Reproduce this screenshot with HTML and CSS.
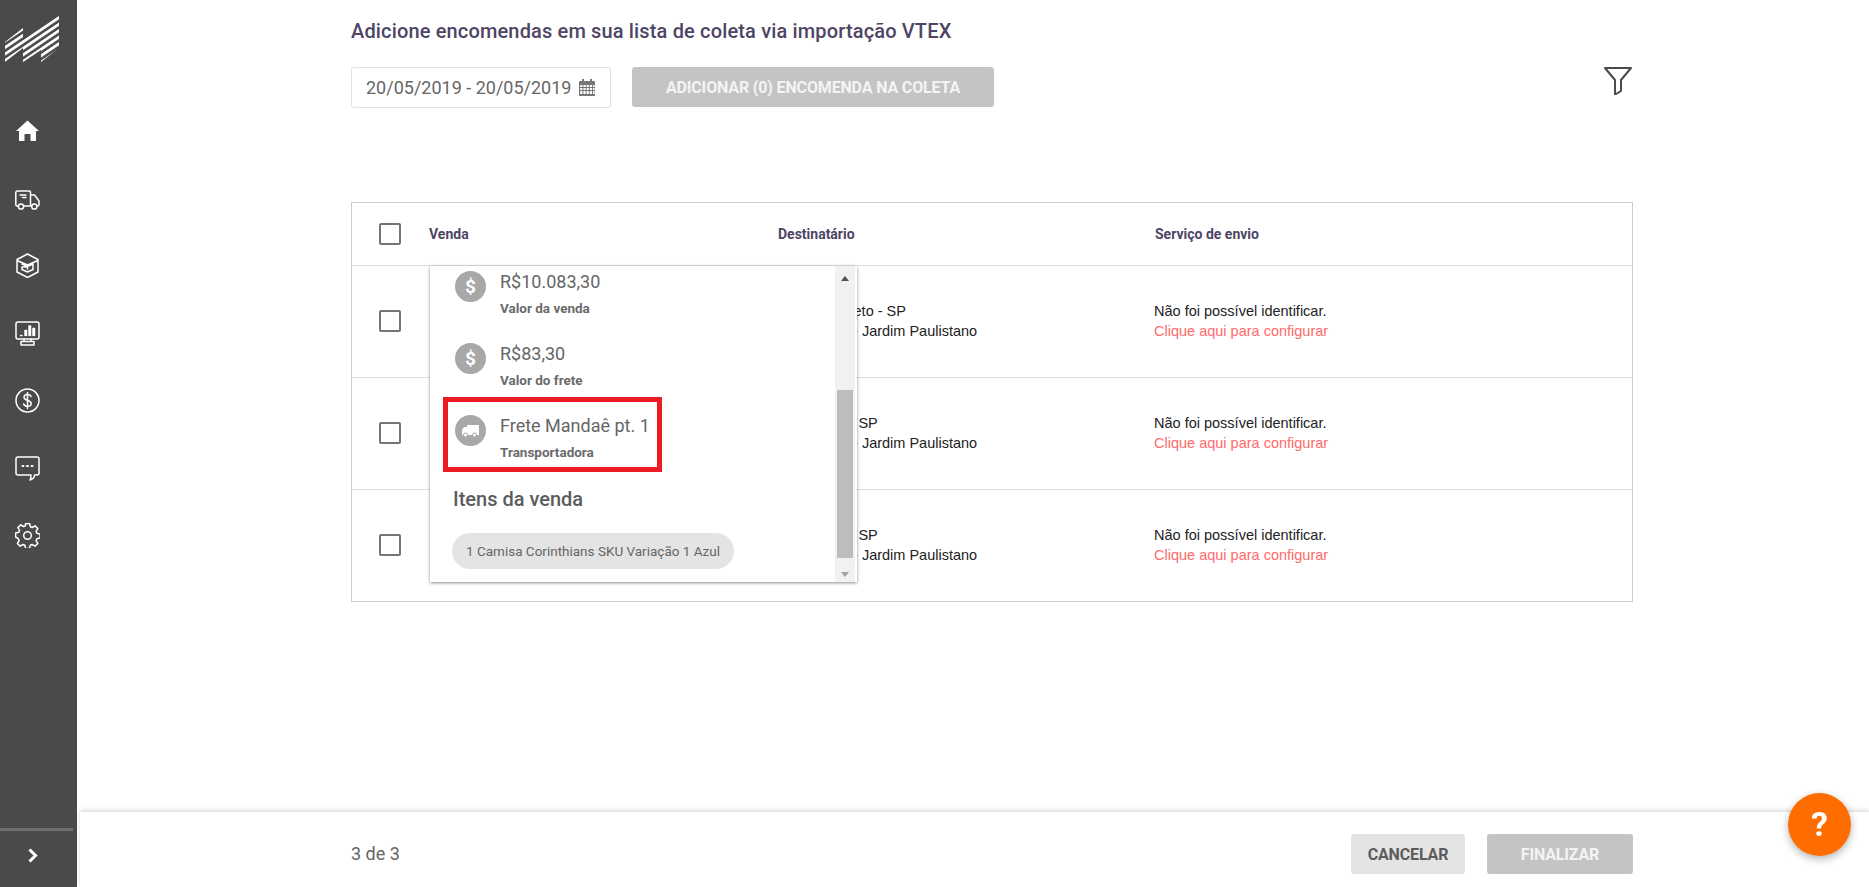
FILE: index.html
```html
<!DOCTYPE html>
<html lang="pt-BR">
<head>
<meta charset="utf-8">
<title>Coleta VTEX</title>
<link rel="stylesheet" href="styles.css">
</head>
<body>
<div class="app">
  <aside class="side">
    <svg class="logo" width="54" height="47" viewBox="5 15 54 47">
      <defs>
        <pattern id="st" width="20" height="5.4" patternUnits="userSpaceOnUse" patternTransform="rotate(-34 5 62)">
          <rect width="20" height="2.8" fill="#fff"/>
        </pattern>
      </defs>
      <polygon fill="url(#st)" points="5,42 23,28 23,48 5,62"/>
      <polygon fill="url(#st)" points="23,40 59,15 59,48 41,62 41,50 23,62"/>
    </svg>
    <nav class="menu">
      <svg class="ic" width="25" height="25" viewBox="0 0 25 25"><path class="fill" d="M12.500 2.500 24 13h-3v10h-5.500v-7h-6v7H4V13H1z"/></svg>
      <svg class="ic" width="25" height="25" viewBox="0 0 25 25"><path d="M3 20H2a1.500 1.500 0 0 1-1.200-1.500V6.500A1.500 1.500 0 0 1 2.300 5h12.200a1 1 0 0 1 1 1v14H9M15.500 9H19.500L24 15v3.500a1.500 1.500 0 0 1-1.500 1.500H22M15.500 20H16.500M5 9H11M7.500 11.500H11"/><circle cx="6" cy="20.500" r="2.600"/><circle cx="19.300" cy="20.500" r="2.600"/></svg>
      <svg class="ic" width="25" height="25" viewBox="0 0 25 25"><path d="M12.500 1 23 6.500V19l-10.500 5.500L2 19V6.500zM2 7.500 12.500 12 23 7.500M12.500 12v4M7 11l5.500 2.500 5.500-2.500v5.500L12.500 19 7 16.500V14h4"/></svg>
      <svg class="ic" width="25" height="25" viewBox="0 0 25 25"><rect x="1" y="1" width="23" height="17" rx="2"/><path d="M9 18v2.500h7V18M6 24v-3.500h13V24zM5.500 14.500h1.500M10 14.500v-5h1.500v5M14 14.500V5h1.500v9.500M18 14.500v-7h1.500v7"/></svg>
      <svg class="ic" width="25" height="25" viewBox="0 0 25 25"><circle cx="12.500" cy="12.500" r="11.500"/><path d="M16 8.500c-.5-1.500-2-2-3.500-2-2 0-3.500 1-3.500 2.800 0 4 7.200 2.400 7.200 6.200 0 1.800-1.600 2.800-3.700 2.800-1.700 0-3.300-.8-3.800-2.300M12.500 4.500v16"/></svg>
      <svg class="ic" width="25" height="25" viewBox="0 0 25 25"><path d="M3 1h19a2 2 0 0 1 2 2v14a2 2 0 0 1-2 2h-2.500c0 2-1 4-4.500 5 1-1.500 1-3.500 1-5H3a2 2 0 0 1-2-2V3a2 2 0 0 1 2-2z"/><path class="dots" d="M7.500 10h1M12 10h1M16.500 10h1"/></svg>
      <svg class="ic" width="25" height="25" viewBox="0 0 25 25"><path d="M10.500 1h4l.7 3.200 1.900.8 2.800-1.700 2.800 2.800-1.700 2.800.8 1.900 3.200.7v4l-3.200.7-.8 1.900 1.700 2.800-2.800 2.800-2.800-1.700-1.900.8-.7 3.200h-4l-.7-3.200-1.900-.8-2.800 1.700-2.800-2.800 1.700-2.800-.8-1.900L.5 14.500v-4l3.200-.7.8-1.900-1.700-2.800 2.800-2.800 2.800 1.700 1.900-.8z" transform="translate(.1 -.5)"/><circle cx="12.500" cy="12.500" r="3.800"/></svg>
    </nav>
    <div class="side-foot">
      <svg class="chev" width="10" height="15" viewBox="0 0 10 15"><path d="M1.500 1.500 7.500 7.500 1.500 13.500"/></svg>
    </div>
  </aside>

  <main class="main">
    <section class="content">
      <h1 class="title">Adicione encomendas em sua lista de coleta via importação VTEX</h1>
      <div class="toolbar">
        <div class="date">
          <span>20/05/2019 - 20/05/2019</span>
          <svg width="16" height="17" viewBox="0 0 16 17"><path class="cal" fill-rule="evenodd" d="M3 0h2v2h6V0h2v2h2a1 1 0 0 1 1 1v13a1 1 0 0 1-1 1H1a1 1 0 0 1-1-1V3a1 1 0 0 1 1-1h2zM1.200 6v2h2.200V6zm3.200 0v2h2.200V6zm3.200 0v2h2.200V6zm3.200 0v2H13V6zm3.200 0v2h1.600V6zM1.200 9v2h2.200V9zm3.200 0v2h2.200V9zm3.200 0v2h2.200V9zm3.200 0v2H13V9zm3.200 0v2h1.600V9zM1.200 12v3h2.200v-3zm3.200 0v3h2.200v-3zm3.200 0v3h2.200v-3zm3.200 0v3H13v-3zm3.200 0v3h1.600v-3z"/></svg>
        </div>
        <button class="btn btn-off btn-add" type="button">ADICIONAR (0) ENCOMENDA NA COLETA</button>
        <svg class="filter" width="28" height="28" viewBox="0 0 28 28"><path d="M1 1h26L17 13v11l-6 3.500V13z"/></svg>
      </div>

      <div class="table">
        <div class="row head">
          <span class="check"></span>
          <span class="th">Venda</span>
          <span class="th">Destinatário</span>
          <span class="th">Serviço de envio</span>
        </div>
        <div class="row">
          <span class="check"></span>
          <span></span>
          <div class="td"><div>Ribeirão&nbsp; Preto - SP</div><div>Av. Mar, 10 - Jardim Paulistano</div></div>
          <div class="td"><div>Não foi possível identificar.</div><a class="link">Clique aqui para configurar</a></div>
        </div>
        <div class="row">
          <span class="check"></span>
          <span></span>
          <div class="td"><div>São Pedro - SP</div><div>Av. Mar, 10 - Jardim Paulistano</div></div>
          <div class="td"><div>Não foi possível identificar.</div><a class="link">Clique aqui para configurar</a></div>
        </div>
        <div class="row">
          <span class="check"></span>
          <span></span>
          <div class="td"><div>São Pedro - SP</div><div>Av. Mar, 10 - Jardim Paulistano</div></div>
          <div class="td"><div>Não foi possível identificar.</div><a class="link">Clique aqui para configurar</a></div>
        </div>

        <div class="popup">
          <div class="pop-body">
            <div class="item">
              <span class="dot">$</span>
              <div><div class="val">R$10.083,30</div><div class="lab">Valor da venda</div></div>
            </div>
            <div class="item">
              <span class="dot">$</span>
              <div><div class="val">R$83,30</div><div class="lab">Valor do frete</div></div>
            </div>
            <div class="item">
              <span class="dot"><svg width="20" height="14" viewBox="0 0 20 14"><path class="truck" d="M6 1h12v10H6zM1 6l2-3h3v8H1z"/><circle class="wheel" cx="4.500" cy="11" r="2"/><circle class="wheel" cx="13.500" cy="11" r="2"/></svg></span>
              <div><div class="val">Frete Mandaê pt. 1</div><div class="lab">Transportadora</div></div>
            </div>
            <h2 class="sub">Itens da venda</h2>
            <span class="chip">1 Camisa Corinthians SKU Variação 1 Azul</span>
          </div>
          <div class="scroll">
            <span class="arrow up"></span>
            <span class="thumb"></span>
            <span class="arrow down"></span>
          </div>
          <div class="mark"></div>
        </div>
      </div>
    </section>

    <footer class="foot">
      <span class="count">3 de 3</span>
      <div class="actions">
        <button class="btn btn-cancel" type="button">CANCELAR</button>
        <button class="btn btn-off btn-end" type="button">FINALIZAR</button>
      </div>
    </footer>
  </main>
</div>
<div class="help">?</div>
</body>
</html>
```

FILE: styles.css
```css
* { box-sizing: border-box; }
html, body { margin: 0; height: 887px; overflow: hidden; background: #fff; }
body { font-family: Roboto, "Liberation Sans", sans-serif; color: #666; }

.app { display: flex; height: 887px; }

/* sidebar */
.side { width: 77px; flex: none; background: #4a4a4a; display: flex; flex-direction: column; padding-top: 15px; }
.logo { display: block; margin-left: 5px; }
.menu { display: flex; flex-direction: column; align-items: flex-start; gap: 42.500px; margin-top: 56px; padding-left: 15px; }
.ic { display: block; fill: none; stroke: #fff; stroke-width: 1.500; stroke-linejoin: round; stroke-linecap: round; }
.ic .fill { fill: #fff; stroke: none; }
.ic .dots { stroke-width: 2; }
.side-foot { margin-top: auto; height: 59px; width: 73px; border-top: 3px solid #6e6e6e; padding: 17px 0 0 28px; }
.chev { display: block; fill: none; stroke: #fff; stroke-width: 3; }

/* main */
.main { flex: 1; display: flex; flex-direction: column; min-width: 0; }
.content { flex: 1; padding: 21px 236px 0 274px; }
.title { margin: 0; font-size: 20px; line-height: 21px; font-weight: 500; letter-spacing: .15px; color: #4e4565; }
.toolbar { display: flex; align-items: flex-start; margin-top: 25px; }
.date { width: 260px; height: 41px; border: 1px solid #e2e2e2; border-radius: 3px; display: flex; align-items: center; justify-content: space-between; padding: 0 15px 0 14px; font-size: 18px; color: #666; }
.cal { fill: #777; }
.btn { border: 0; border-radius: 3px; font-family: inherit; font-weight: 700; font-size: 16px; letter-spacing: -.15px; height: 40px; padding: 0; }
.btn-off { background: #c4c4c4; color: #f4f4f4; }
.btn-add { width: 362px; margin-left: 21px; }
.filter { margin-left: auto; margin-right: 1px; fill: none; stroke: #4a4a4a; stroke-width: 2; stroke-linejoin: round; }

/* table */
.table { position: relative; margin-top: 94px; border: 1px solid #cfcfcf; width: 1282px; }
.row { display: grid; grid-template-columns: 77px 349px 377px 1fr; align-items: center; height: 112px; border-top: 1px solid #dedede; }
.row.head { height: 62px; border-top: 0; }
.check { display: block; width: 22px; height: 22px; margin: -1px 0 0 27px; border: 2px solid #757575; border-radius: 2px; }
.th { font-size: 14px; font-weight: 700; color: #4e4565; }
.td { font-family: "Liberation Sans", Arial, sans-serif; font-size: 14.500px; line-height: 20px; color: #222; white-space: nowrap; margin-top: -2px; margin-left: -1px; }
.link { color: #ff6a6a; }

/* popup */
.popup { position: absolute; left: 78px; top: 63px; width: 427px; height: 316px; background: #fff; display: flex; box-shadow: 0 1px 3px rgba(0,0,0,.45); }
.pop-body { flex: 1; padding: 5px 0 0 22px; }
.item { display: flex; align-items: flex-start; height: 72px; gap: 14px; margin-left: 3px; }
.dot { flex: none; width: 31px; height: 31px; border-radius: 50%; background: #a8a8a8; color: #fff; font-weight: 700; font-size: 19px; line-height: 31px; text-align: center; display: flex; align-items: center; justify-content: center; }
.val { font-size: 18px; line-height: 21px; color: #666; }
.lab { font-size: 13.500px; line-height: 16px; font-weight: 700; color: #6a6a6a; margin-top: 8px; }
.truck, .wheel { fill: #fff; }
.wheel { stroke: #a8a8a8; stroke-width: 1; }
.sub { margin: 0 0 0 1px; padding-top: 2px; font-size: 20px; line-height: 21px; font-weight: 500; color: #5c5c5c; }
.chip { display: inline-block; margin-top: 23px; height: 36px; line-height: 36px; padding: 0 14px; border-radius: 18px; background: #e4e4e4; font-size: 13.500px; color: #666; white-space: nowrap; }
.scroll { flex: none; width: 20px; background: #f1f1f1; display: flex; flex-direction: column; align-items: center; justify-content: space-between; padding: 10px 0 5px; position: relative; margin-right: 2px; }
.arrow { width: 0; height: 0; border-left: 4.500px solid transparent; border-right: 4.500px solid transparent; }
.arrow.up { border-bottom: 5px solid #505050; }
.arrow.down { border-top: 5px solid #a3a3a3; }
.thumb { position: absolute; left: 2px; right: 2px; top: 124px; height: 168px; background: #bdbdbd; }
.mark { position: absolute; left: 13px; top: 131px; width: 219px; height: 75px; border: 5px solid #ed1c24; }

/* footer */
.foot { height: 75px; flex: none; margin-left: 3px; padding: 22px 236px 0 271px; display: flex; justify-content: space-between; box-shadow: 0 -2px 4px rgba(0,0,0,.14); background: #fff; position: relative; }
.count { font-size: 18px; line-height: 40px; color: #666; }
.actions { display: flex; gap: 22px; }
.btn-cancel { width: 114px; background: #e4e4e4; color: #5c5c5c; }
.btn-end { width: 146px; }

/* help */
.help { position: fixed; left: 1788px; top: 793px; width: 63px; height: 63px; border-radius: 50%; background: #ff6d00; color: #fff; font-weight: 700; font-size: 34px; line-height: 63px; text-align: center; box-shadow: 0 3px 8px rgba(0,0,0,.3); }
```
